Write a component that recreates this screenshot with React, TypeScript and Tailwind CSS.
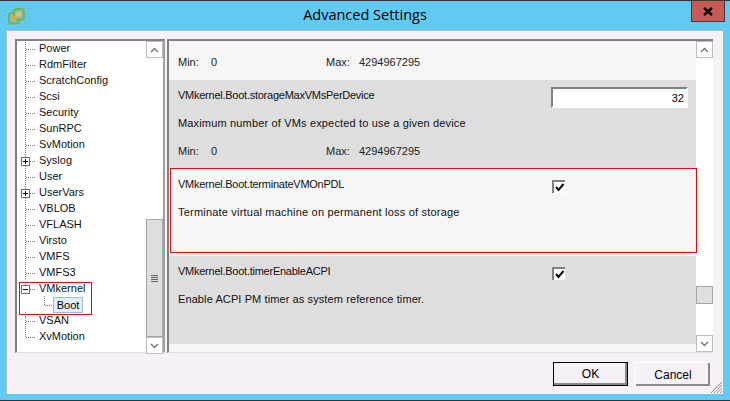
import React from 'react';

const uiFont = "font-['Liberation_Sans',sans-serif]";

const treeItems = [
  { label: 'Power', kind: 'leaf' },
  { label: 'RdmFilter', kind: 'leaf' },
  { label: 'ScratchConfig', kind: 'leaf' },
  { label: 'Scsi', kind: 'leaf' },
  { label: 'Security', kind: 'leaf' },
  { label: 'SunRPC', kind: 'leaf' },
  { label: 'SvMotion', kind: 'leaf' },
  { label: 'Syslog', kind: 'plus' },
  { label: 'User', kind: 'leaf' },
  { label: 'UserVars', kind: 'plus' },
  { label: 'VBLOB', kind: 'leaf' },
  { label: 'VFLASH', kind: 'leaf' },
  { label: 'Virsto', kind: 'leaf' },
  { label: 'VMFS', kind: 'leaf' },
  { label: 'VMFS3', kind: 'leaf' },
  { label: 'VMkernel', kind: 'minus' },
  { label: 'Boot', kind: 'child' },
  { label: 'VSAN', kind: 'leaf' },
  { label: 'XvMotion', kind: 'last' },
];

const Connector = ({ kind }: { kind: string }) => (
  <svg width="22" height="16" className="shrink-0" shapeRendering="crispEdges">
    <line x1="8.5" y1={kind === 'minus' ? 4 : 0} x2="8.5" y2={kind === 'last' || kind === 'minus' ? 9 : 16} stroke="#777" strokeDasharray="1 1" />
    <line x1="9" y1="9.5" x2="18" y2="9.5" stroke="#777" strokeDasharray="1 1" />
    {(kind === 'plus' || kind === 'minus') && (
      <g>
        <rect x="4.5" y="5.5" width="8" height="8" fill="#fff" stroke="#6e6e6e" />
        <line x1="6" y1="9.5" x2="11" y2="9.5" stroke="#000" />
        {kind === 'plus' && <line x1="8.5" y1="7" x2="8.5" y2="12" stroke="#000" />}
      </g>
    )}
  </svg>
);

const TreeRow = ({ label, kind }: { label: string; kind: string }) => {
  if (kind === 'child') {
    return (
      <div className="flex h-4 items-center">
        <svg width="36" height="16" className="shrink-0" shapeRendering="crispEdges">
          <line x1="27.5" y1="0" x2="27.5" y2="9" stroke="#777" strokeDasharray="1 1" />
          <line x1="28" y1="9.5" x2="36" y2="9.5" stroke="#777" strokeDasharray="1 1" />
        </svg>
        <span className="mt-[1px] flex h-4 w-[30px] items-center justify-center border border-[#9cbcd6] bg-[#e4edf5] text-black">{label}</span>
      </div>
    );
  }
  return (
    <div className="flex h-4 items-center">
      <Connector kind={kind} />
      <span className="text-[#111]">{label}</span>
    </div>
  );
};

const ScrollBar = ({ children }: { children: React.ReactNode }) => (
  <div className="flex h-full w-[17px] shrink-0 flex-col bg-white">{children}</div>
);

const ArrowButton = ({ dir }: { dir: 'up' | 'down' }) => (
  <div className="flex h-[17px] w-[17px] shrink-0 items-center justify-center border border-[#bdbdbd] bg-white">
    <svg width="9" height="6" fill="none" stroke="#707070" strokeWidth="1.3">
      <path d={dir === 'up' ? 'M1 5 L4.5 1.5 L8 5' : 'M1 1 L4.5 4.5 L8 1'} />
    </svg>
  </div>
);

const Thumb = ({ className, grip }: { className: string; grip?: boolean }) => (
  <div className={`flex w-[17px] items-center justify-center border border-[#a6a6a6] bg-[#dedede] ${className}`}>
    {grip && (
      <div className="flex flex-col gap-[1px]">
        <div className="h-[1px] w-[7px] bg-[#606060]" />
        <div className="h-[1px] w-[7px] bg-[#606060]" />
        <div className="h-[1px] w-[7px] bg-[#606060]" />
        <div className="h-[1px] w-[7px] bg-[#606060]" />
      </div>
    )}
  </div>
);

const Limits = () => (
  <div className="flex h-4 items-center text-[#222]">
    <span className="w-[33px]">Min:</span>
    <span className="w-[115px]">0</span>
    <span className="w-[33px]">Max:</span>
    <span>4294967295</span>
  </div>
);

const CheckBox = () => (
  <div className="mt-[4px] flex h-[13px] w-[13px] items-center justify-center border-t-2 border-l-2 border-[#808080] bg-white">
    <svg width="10" height="9" fill="none" stroke="#000" strokeWidth="2">
      <path d="M1 4 L3.5 7 L8.5 1" />
    </svg>
  </div>
);

export default function App() {
  return (
    <div className={`flex h-[401px] w-[730px] flex-col overflow-hidden bg-[#62c9f0] text-[11px] leading-4 ${uiFont}`}>
      <div className="h-[1px] shrink-0 bg-[#333]" />

      {/* title bar */}
      <div className="relative flex h-[29px] shrink-0 items-center justify-center pb-[2px]">
        <svg width="17" height="17" viewBox="0 0 17 17" className="absolute left-[8px] top-[7px]">
          <rect x="1" y="5" width="10" height="10.5" rx="2.5" fill="#62c9f0" stroke="#7fb13c" strokeWidth="2" />
          <rect x="6" y="1" width="10" height="10.5" rx="2.5" fill="#62c9f0" stroke="#7fb13c" strokeWidth="2" />
          <rect x="4" y="8" width="4.5" height="4.5" fill="#efa51c" />
          <rect x="8.5" y="4" width="4.5" height="4.5" fill="#f5c141" />
        </svg>
        <span className="font-['Open_Sans',sans-serif] text-[14.5px] text-black">Advanced Settings</span>
        <div className="absolute right-[5px] top-[-1px] flex h-[22px] w-[34px] items-center justify-center border border-[#43393a] bg-[#c75a54]">
          <svg width="10" height="9" stroke="#000" strokeWidth="2.4">
            <path d="M1 1 L9 8 M9 1 L1 8" />
          </svg>
        </div>
      </div>

      {/* client area */}
      <div className="mr-[7px] ml-[6px] mb-[7px] flex min-h-0 flex-1 flex-col border-t border-l border-[#a9bccb] bg-[#f6f1f6] pt-[8px] pl-[8px] pr-[10px]">
        <div className="flex h-[314px] shrink-0 gap-[2px]">
          {/* tree */}
          <div className="relative flex h-full w-[150px] shrink-0 border-t-2 border-l-2 border-b border-r-2 border-t-[#808080] border-l-[#808080] border-b-[#e3e3e3] border-r-[#a0a0a0] bg-white">
            <div className="-mt-[1px] min-w-0 flex-1 overflow-hidden">
              {treeItems.map((item) => (
                <TreeRow key={item.label} label={item.label} kind={item.kind} />
              ))}
            </div>
            <ScrollBar>
              <ArrowButton dir="up" />
              <div className="h-[161px] shrink-0" />
              <Thumb className="h-[118px] shrink-0" grip />
              <div className="flex-1" />
              <ArrowButton dir="down" />
            </ScrollBar>
            <div className="absolute left-[2px] top-[241px] h-[33px] w-[73px] border border-[#ff0000]" />
          </div>

          {/* settings list */}
          <div className="flex h-full min-w-0 flex-1 border-t-2 border-l-2 border-b border-t-[#808080] border-l-[#808080] border-b-[#e3e3e3] bg-[#f6f6f6]">
            <div className="min-w-0 flex-1">
              <div className="flex h-[39px] flex-col justify-end pr-[8px] pl-[9px] pb-[10px]">
                <Limits />
              </div>
              <div className="h-[88px] bg-[#dedede] pr-[8px] pl-[9px] pt-[7px]">
                <div className="flex items-start justify-between">
                  <span className="tracking-[-0.25px] text-[#111]">VMkernel.Boot.storageMaxVMsPerDevice</span>
                  <div className="h-[21px] w-[137px] border-t-2 border-l-2 border-b-2 border-r-2 border-t-[#808080] border-l-[#808080] border-b-white border-r-white bg-white pr-[2px] text-right leading-[18px] text-black">
                    32
                  </div>
                </div>
                <div className="-mt-[1px] pt-[8px] tracking-[0.16px] text-[#111]">Maximum number of VMs expected to use a given device</div>
                <div className="pt-[12px]">
                  <Limits />
                </div>
              </div>
              <div className="relative h-[85px] pr-[8px] pl-[9px] pt-[8px]">
                <div className="absolute top-0 left-[1px] -right-[1px] h-[85px] border border-[#ff0000]" />
                <div className="flex items-start justify-between pr-[123px]">
                  <span className="tracking-[-0.25px] text-[#111]">VMkernel.Boot.terminateVMOnPDL</span>
                  <CheckBox />
                </div>
                <div className="pt-[11px] tracking-[0.2px] text-[#111]">Terminate virtual machine on permanent loss of storage</div>
              </div>
              <div className="mt-[3px] h-[88px] bg-[#dedede] pr-[8px] pl-[9px] pt-[7px]">
                <div className="flex items-start justify-between pr-[123px]">
                  <span className="tracking-[-0.25px] text-[#111]">VMkernel.Boot.timerEnableACPI</span>
                  <CheckBox />
                </div>
                <div className="pt-[11px] tracking-[0.1px] text-[#111]">Enable ACPI PM timer as system reference timer.</div>
              </div>
            </div>
            <ScrollBar>
              <ArrowButton dir="up" />
              <div className="h-[228px] shrink-0" />
              <Thumb className="h-[18px] shrink-0" />
              <div className="flex-1" />
              <ArrowButton dir="down" />
            </ScrollBar>
          </div>
        </div>

        {/* footer buttons */}
        <div className="relative flex flex-1 items-start justify-end gap-[7px] pt-[9px] pr-[3px]">
          <button className="h-[24px] w-[75px] border border-black bg-[#f6f1f6] text-[12px] leading-4 text-black shadow-[inset_-2px_-2px_0_#8a8a8a]">
            OK
          </button>
          <button className="h-[24px] w-[75px] border-t border-l border-t-white border-l-white bg-[#f6f1f6] text-[12px] leading-4 text-black shadow-[inset_-2px_-2px_0_#8a8a8a]">
            Cancel
          </button>
          <svg width="13" height="13" className="absolute right-[-10px] bottom-0" stroke="#8f8f8f" strokeWidth="1">
            <path d="M12 1 L1 12 M12 4 L4 12 M12 7 L7 12 M12 10 L10 12" />
          </svg>
        </div>
      </div>
      <div className="-mt-[1px] h-[1px] shrink-0 bg-[#333]" />
    </div>
  );
}
